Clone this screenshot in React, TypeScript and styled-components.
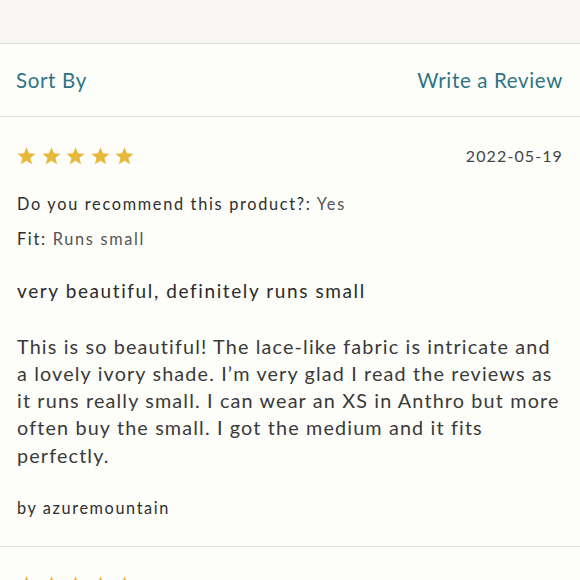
import React from 'react';
import styled, { createGlobalStyle } from 'styled-components';

const GlobalStyle = createGlobalStyle`
  html, body {
    margin: 0;
    padding: 0;
    background: #fdfdf9;
  }
  body {
    font-family: Lato, "Open Sans", sans-serif;
    color: #333;
    overflow: hidden;
  }
`;

const TopBand = styled.div`
  height: 44px;
  background: #f7f6f3;
  border-bottom: 1px solid #dcdcd8;
  box-sizing: border-box;
`;

const Toolbar = styled.div`
  height: 73px;
  display: flex;
  align-items: center;
  justify-content: space-between;
  padding: 0 17px 0 16px;
  border-bottom: 1px solid #dcdcd8;
  box-sizing: border-box;
`;

const ToolLink = styled.a`
  color: #2f7484;
  font-size: 20.5px;
  letter-spacing: 0.65px;
  text-decoration: none;
  cursor: pointer;
`;

const Review = styled.article`
  padding: 28px 17px 28px 17px;
  border-bottom: 1px solid #dcdcd8;
`;

const TopRow = styled.div`
  display: flex;
  align-items: center;
  justify-content: space-between;
  height: 20px;
`;

const Stars = styled.div`
  display: flex;
  gap: 5.5px;
`;

const DateText = styled.span`
  font-size: 16px;
  letter-spacing: 1.1px;
  color: #444;
`;

const Meta = styled.p<{ $gap: number }>`
  margin: ${p => p.$gap}px 0 0;
  font-size: 16.3px;
  line-height: 20px;
  letter-spacing: 1.7px;
  color: #2e2e2e;

  span {
    color: #555;
  }
`;

const Title = styled.h3`
  margin: 30px 0 0;
  font-size: 19px;
  line-height: 24px;
  font-weight: 400;
  letter-spacing: 1.6px;
  color: #2b2b2b;
`;

const Body = styled.p`
  margin: 29.5px -4px 0 0;
  font-size: 19.8px;
  line-height: 27.3px;
  letter-spacing: 1.15px;
  color: #3a3a3a;
`;

const Author = styled.p`
  margin: 29px 0 0;
  font-size: 16.3px;
  line-height: 20px;
  letter-spacing: 1.6px;
  color: #2e2e2e;
`;

const Star = () => (
  <svg width="19" height="19" viewBox="0 0 24 24">
    <path
      fill="#e8b83a"
      d="M12 1.5l3.1 7.6 8.2.6-6.3 5.3 2 8L12 18.6 4.9 23l2-8L.7 9.7l8.2-.6z"
    />
  </svg>
);

const StarRow = () => (
  <Stars>
    {[0, 1, 2, 3, 4].map(i => (
      <Star key={i} />
    ))}
  </Stars>
);

export default function App() {
  return (
    <>
      <GlobalStyle />
      <TopBand />
      <Toolbar>
        <ToolLink>Sort By</ToolLink>
        <ToolLink>Write a Review</ToolLink>
      </Toolbar>
      <Review>
        <TopRow>
          <StarRow />
          <DateText>2022-05-19</DateText>
        </TopRow>
        <Meta $gap={29}>
          Do you recommend this product?: <span>Yes</span>
        </Meta>
        <Meta $gap={15}>
          Fit: <span>Runs small</span>
        </Meta>
        <Title>very beautiful, definitely runs small</Title>
        <Body>
          This is so beautiful! The lace-like fabric is intricate and a lovely ivory shade. I’m very
          glad I read the reviews as it runs really small. I can wear an XS in Anthro but more often
          buy the small. I got the medium and it fits perfectly.
        </Body>
        <Author>by azuremountain</Author>
      </Review>
      <Review>
        <TopRow>
          <StarRow />
          <DateText>2022-06-03</DateText>
        </TopRow>
      </Review>
    </>
  );
}
